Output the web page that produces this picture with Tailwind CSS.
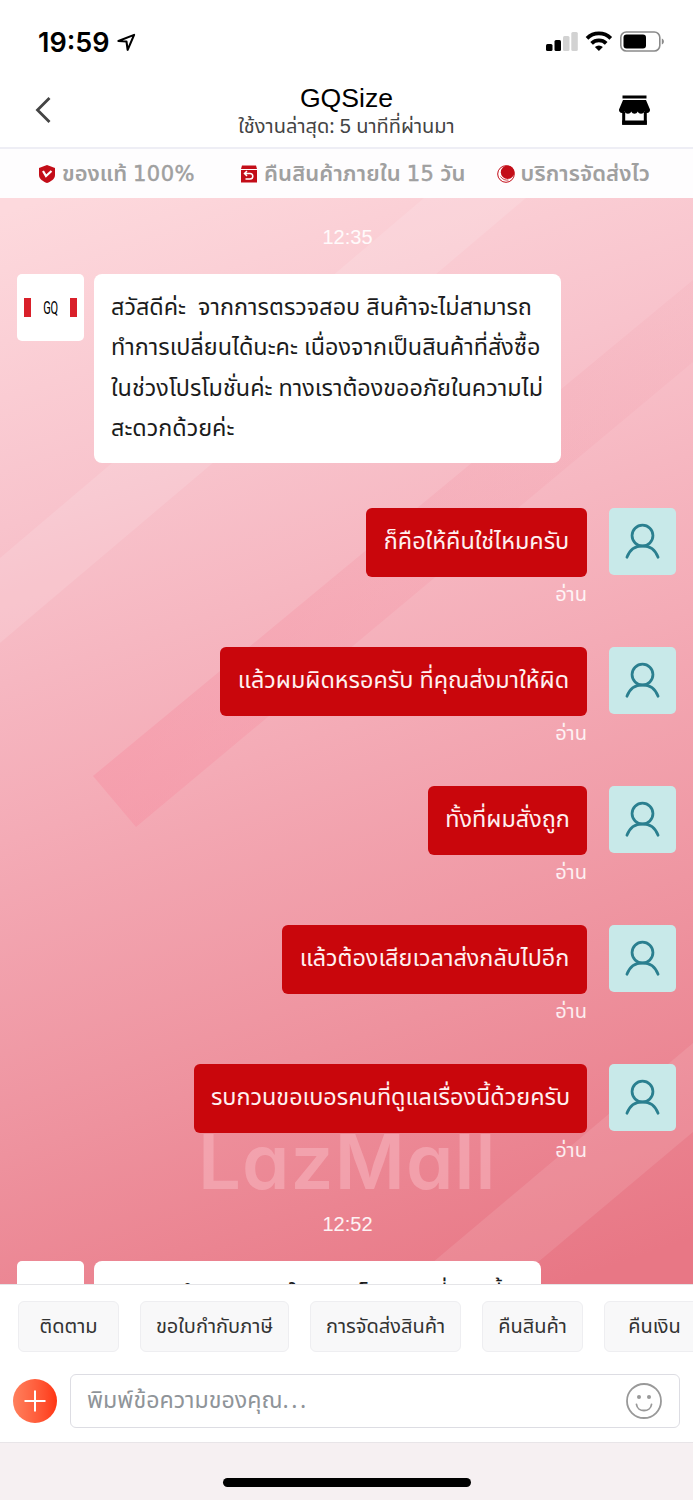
<!DOCTYPE html>
<html lang="th">
<head>
<meta charset="utf-8">
<title>GQSize</title>
<script src="https://cdn.jsdelivr.net/npm/@tailwindcss/browser@4"></script>
</head>
<body class="w-[693px] h-[1500px] overflow-hidden bg-white flex flex-col font-['Noto_Sans_Thai','Noto_Sans',sans-serif] whitespace-nowrap">
<svg class="hidden"><defs>
<symbol id="person" viewBox="0 0 68 68"><g fill="none" stroke="#2a7f8f" stroke-width="2.8" stroke-linecap="round"><circle cx="34" cy="28" r="10.6"/><path d="M18.200 50C21 42.500 27 38.500 34 38.500S47 42.500 49.800 50"/></g></symbol>
</defs></svg>

<!-- status bar -->
<div class="h-[82px] shrink-0 flex items-center pl-[38px] pr-[27px] pt-0.5">
  <span class="font-['Inter'] font-semibold text-[27px] leading-none">19:59</span>
  <svg class="ml-[7px] size-[19px]" viewBox="0 0 20 20"><path d="M1.500 8.500 18 2 11.200 17.800 10 9Z" fill="none" stroke="#000" stroke-width="2.200" stroke-linejoin="round"/></svg>
  <svg class="ml-auto w-[120px] h-[24px]" viewBox="546 30 120 24">
    <rect x="546" y="44" width="6.500" height="7" rx="1.500"/><rect x="554.500" y="40" width="6.500" height="11" rx="1.500"/><rect x="563" y="36" width="6.500" height="15" rx="1.500" fill="#d2d2d2"/><rect x="571.300" y="32" width="6.500" height="19" rx="1.500" fill="#d2d2d2"/>
    <g fill="none" stroke="#000" stroke-width="3.800"><path d="M587 38.300a17 17 0 0 1 23.800 0"/><path d="M591.600 43.300a10.500 10.500 0 0 1 14.600 0"/></g><path d="M598.900 51l-4-4a6 6 0 0 1 8 0z"/>
    <rect x="620.800" y="32" width="39" height="19" rx="5.500" fill="none" stroke="#8a8a8a" stroke-width="1.600"/><rect x="623.500" y="34.500" width="22.500" height="14" rx="3"/><path d="M661.800 38.500c2.800 1 2.800 5 0 6z" fill="#8a8a8a"/>
  </svg>
</div>

<!-- title bar -->
<div class="h-[67px] shrink-0 grid grid-cols-[1fr_auto_1fr] items-start border-b-2 border-[#eeeef5] pl-[34px] pr-[42px]">
  <svg class="w-[18px] h-[28px] mt-[14px]" viewBox="0 0 18 28"><path d="M15.500 2 3.500 14l12 12" fill="none" stroke="#444" stroke-width="2.800"/></svg>
  <div class="flex flex-col items-center pl-[8px]">
    <div class="font-['Liberation_Sans'] text-[26.600px] leading-8 h-8">GQSize</div>
    <div class="text-[20px] leading-[25px] text-[#444]">ใช้งานล่าสุด: <span class="font-['Liberation_Sans']">5</span> นาทีที่ผ่านมา</div>
  </div>
  <svg class="w-[34px] h-[32px] mt-[13px] ml-auto" viewBox="-1 0 34 32"><path d="M4.500 .5h24v3h-24zM5 5h23l4 9.500c.5 3-3.500 5-5.500 2-1.500 3-5.500 3-6.800 0-1.200 3-5.200 3-6.400 0-1.300 3-5.300 3-6.800 0C4.500 19.500.500 17.500 1 14.500z"/><path d="M5.700 17v11.200h21.600V17" fill="none" stroke="#000" stroke-width="3"/><path d="M4.200 25.500h24.600v4.200H4.200z"/></svg>
</div>

<!-- service guarantees -->
<div class="h-[49px] shrink-0 bg-[#fefdfe] flex items-center pl-[38px] pr-[43px] text-[22px] leading-[30px] font-semibold text-[#a0a0a0]">
  <div class="w-[202px] flex items-center gap-[6px]"><svg class="size-[18px]" viewBox="0 0 18 18"><path d="M9 0 17 3v7c0 4-4 6.500-8 8-4-1.500-8-4-8-8V3z" fill="#c30d18"/><path d="M5 6 8 11 13.500 6" fill="none" stroke="#fff" stroke-width="2.200"/></svg><span class="pt-[3px]">ของแท้ <span class="font-['DejaVu_Sans'] font-normal text-[21px] leading-none tracking-[.5px] [-webkit-text-stroke:.5px_#a0a0a0]">100%</span></span></div>
  <div class="flex items-center gap-[6px]"><svg class="size-[18px]" viewBox="0 0 18 18"><path d="M2 .5h14l1 3.500H1zM1 5h16v12.500H1z" fill="#c30d18"/><path d="M7 6 4.500 8.500 7 11M5 8.500h5a2.800 2.800 0 0 1 0 5.600H5.500" fill="none" stroke="#fff" stroke-width="1.500"/></svg><span class="pt-[3px] tracking-[.12px]">คืนสินค้าภายใน <span class="font-['DejaVu_Sans'] font-normal text-[21px] leading-none tracking-[.5px] [-webkit-text-stroke:.5px_#a0a0a0]">15</span> วัน</span></div>
  <div class="ml-auto flex items-center gap-[6px]"><svg class="size-[18px]" viewBox="0 0 18 18"><circle cx="9" cy="9" r="8.300" fill="#fff" stroke="#c30d18"/><circle cx="10.600" cy="7.200" r="6.800" fill="#c30d18"/><path d="M3.500 11.500c2 3 5 4 8 3.500" fill="none" stroke="#c30d18" stroke-width=".8"/></svg><span class="pt-[3px] tracking-[.1px]">บริการจัดส่งไว</span></div>
</div>

<!-- conversation -->
<main class="relative h-[1086px] shrink-0 overflow-hidden">
  <svg class="absolute inset-0 w-[693px] h-[1086px]" viewBox="0 198 693 1086">
    <defs>
      <linearGradient id="bg" gradientUnits="userSpaceOnUse" x1="130" y1="170" x2="510" y2="1300"><stop offset="0" stop-color="#fdd9dd"/><stop offset=".25" stop-color="#f8c3cc"/><stop offset=".5" stop-color="#f4abb6"/><stop offset=".75" stop-color="#ee929e"/><stop offset="1" stop-color="#e87785"/></linearGradient>
      <linearGradient id="band" gradientUnits="userSpaceOnUse" x1="115" y1="800" x2="690" y2="320"><stop offset="0" stop-color="#f78da0" stop-opacity=".42"/><stop offset="1" stop-color="#f2a0ad" stop-opacity=".15"/></linearGradient>
    </defs>
    <path fill="url(#bg)" d="M0 198h693v1086H0z"/>
    <path fill="#fff" fill-opacity=".12" d="M424 198h102L0 643v-85z"/>
    <path fill="url(#band)" d="M93 776 693 280v82L136 827z"/>
    <path fill="#fff" fill-opacity=".1" d="M693 1043v89L512 1284H407z"/>
  </svg>
  <div class="absolute left-[198px] top-[919px] font-['Inter'] font-semibold text-[76px] leading-[88px] tracking-[1.100px] text-[#f7b3bd]/60 [font-feature-settings:'cv11','ss03']">LazMall</div>

  <div class="relative flex flex-col">
    <div class="pt-[27px] pl-0.5 h-[76px] text-center font-['Liberation_Sans'] text-[20px] leading-6 text-white/90">12:35</div>
    <div class="flex items-start gap-2.5 pl-[17px] h-[234px]">
      <div class="size-[67px] rounded-[5px] bg-white flex items-center justify-between px-[7px]"><i class="w-[7px] h-[19px] bg-[#d9202a]"></i><span class="font-['Roboto'] text-[19px] leading-none tracking-tight scale-x-[.58] -mx-2">GQ</span><i class="w-[7px] h-[19px] bg-[#d9202a]"></i></div>
      <div class="w-[467px] h-[189px] rounded-[8px] bg-white pl-[17px] pt-[14px] text-[23.400px] leading-[40.300px] text-[#1c1c1c]">
        <div class="whitespace-pre">สวัสดีค่ะ  จากการตรวจสอบ สินค้าจะไม่สามารถ</div><div>ทำการเปลี่ยนได้นะคะ เนื่องจากเป็นสินค้าที่สั่งซื้อ</div><div>ในช่วงโปรโมชั่นค่ะ ทางเราต้องขออภัยในความไม่</div><div>สะดวกด้วยค่ะ</div>
      </div>
    </div>

    <div class="flex justify-end gap-[22px] pr-[17px] h-[139px]">
      <div class="flex flex-col items-end"><div class="w-[221px] h-[69px] rounded-[6px] bg-[#c9060c] flex items-center justify-center text-[23.400px] text-[#fff0f0] pt-px">ก็คือให้คืนใช่ไหมครับ</div><div class="text-[20px] leading-[36px] text-white/85">อ่าน</div></div>
      <svg class="size-[67px] rounded-[5px] bg-[#c8e9e9]"><use href="#person"/></svg>
    </div>
    <div class="flex justify-end gap-[22px] pr-[17px] h-[139px]">
      <div class="flex flex-col items-end"><div class="w-[367px] h-[69px] rounded-[6px] bg-[#c9060c] flex items-center justify-center text-[23.400px] text-[#fff0f0] pt-px">แล้วผมผิดหรอครับ ที่คุณส่งมาให้ผิด</div><div class="text-[20px] leading-[36px] text-white/85">อ่าน</div></div>
      <svg class="size-[67px] rounded-[5px] bg-[#c8e9e9]"><use href="#person"/></svg>
    </div>
    <div class="flex justify-end gap-[22px] pr-[17px] h-[139px]">
      <div class="flex flex-col items-end"><div class="w-[159px] h-[69px] rounded-[6px] bg-[#c9060c] flex items-center justify-center text-[23.400px] text-[#fff0f0] pt-px">ทั้งที่ผมสั่งถูก</div><div class="text-[20px] leading-[36px] text-white/85">อ่าน</div></div>
      <svg class="size-[67px] rounded-[5px] bg-[#c8e9e9]"><use href="#person"/></svg>
    </div>
    <div class="flex justify-end gap-[22px] pr-[17px] h-[139px]">
      <div class="flex flex-col items-end"><div class="w-[305px] h-[69px] rounded-[6px] bg-[#c9060c] flex items-center justify-center text-[23.400px] text-[#fff0f0] pt-px">แล้วต้องเสียเวลาส่งกลับไปอีก</div><div class="text-[20px] leading-[36px] text-white/85">อ่าน</div></div>
      <svg class="size-[67px] rounded-[5px] bg-[#c8e9e9]"><use href="#person"/></svg>
    </div>
    <div class="flex justify-end gap-[22px] pr-[17px] h-[139px]">
      <div class="flex flex-col items-end"><div class="w-[393px] h-[69px] rounded-[6px] bg-[#c9060c] flex items-center justify-center text-[23.400px] text-[#fff0f0] pt-px">รบกวนขอเบอรคนที่ดูแลเรื่องนี้ด้วยครับ</div><div class="text-[20px] leading-[36px] text-white/85">อ่าน</div></div>
      <svg class="size-[67px] rounded-[5px] bg-[#c8e9e9]"><use href="#person"/></svg>
    </div>

    <div class="pt-[9px] pl-0.5 h-[58px] text-center font-['Liberation_Sans'] text-[20px] leading-6 text-white/90">12:52</div>
    <div class="flex items-start gap-2.5 pl-[17px] h-[90px]">
      <div class="size-[67px] rounded-[5px] bg-white"></div>
      <div class="w-[447px] h-[90px] rounded-[8px] bg-white pl-[17px] pt-[13px] text-[23.400px] leading-[40.300px] tracking-[.35px] text-[#1c1c1c]">ทางเราทำการตรวจในระบบโปรดรอที่ตรงนี้</div>
    </div>
  </div>
</main>

<!-- quick replies and composer -->
<footer class="h-[158px] shrink-0 border-t border-[#e5e5e8] overflow-hidden">
  <div class="flex gap-[21px] pl-[18px] pt-4 text-[20px] text-[#333] [&>div]:h-[51px] [&>div]:shrink-0 [&>div]:rounded-[6px] [&>div]:border [&>div]:border-[#eeeef1] [&>div]:bg-[#f8f8f9] [&>div]:flex [&>div]:items-center [&>div]:justify-center">
    <div class="w-[101px]">ติดตาม</div><div class="w-[149px]">ขอใบกำกับภาษี</div><div class="w-[151px]">การจัดส่งสินค้า</div><div class="w-[101px]">คืนสินค้า</div><div class="w-[101px]">คืนเงิน</div>
  </div>
  <div class="mt-[22px] pl-[13px] pr-[13px] flex items-center gap-[13px]">
    <div class="size-[44px] rounded-full bg-linear-to-r from-[#ff7f5c] to-[#ff3410] flex items-center justify-center"><svg class="size-[22px]" viewBox="0 0 22 22"><path d="M11 0.500v21M.5 11h21" stroke="#fff" stroke-width="2"/></svg></div>
    <div class="flex-1 h-[54px] rounded-[6px] border border-[#dddde3] flex items-center justify-between pl-4 pr-[17px]"><span class="text-[23.200px] text-[#8f9499]">พิมพ์ข้อความของคุณ<span class="tracking-[2.500px]">...</span></span>
      <svg class="size-[36px]" viewBox="0 0 36 36" fill="none" stroke="#999" stroke-width="1.800"><circle cx="18" cy="18" r="17"/><path d="M10.500 21.500c1 8 14 8 15 0" stroke-linecap="round"/><circle cx="13" cy="14" r="2" fill="#999" stroke="none"/><circle cx="23" cy="14" r="2" fill="#999" stroke="none"/></svg>
    </div>
  </div>
</footer>
<div class="h-[58px] shrink-0 bg-[#f6f0f2] border-t border-[#e8e5e8] flex justify-center pt-[35px]"><div class="w-[248px] h-[9px] rounded-full bg-black"></div></div>
</body>
</html>
